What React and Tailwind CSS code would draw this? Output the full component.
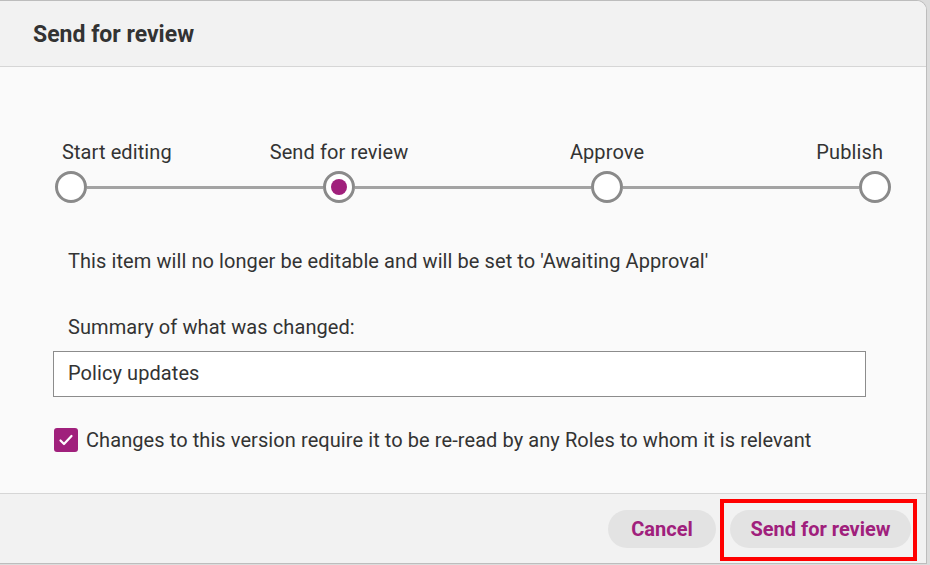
import React, { useState } from 'react';

const steps = ['Start editing', 'Send for review', 'Approve', 'Publish'];

function StepCircle({ active }) {
  return (
    <div className="flex h-[32px] w-[32px] shrink-0 items-center justify-center rounded-full border-[3px] border-[#8a8a8a] bg-white">
      {active && <div className="h-[16px] w-[16px] rounded-full bg-[#a0207c]" />}
    </div>
  );
}

function Stepper({ current }) {
  return (
    <div className="ml-[2px]">
      <div className="flex h-[24px] items-center px-[16px] text-[20px] leading-[24px] tracking-[0.1px] text-[#333]">
        <div className="flex w-0 justify-start">
          <span className="ml-[-9px] whitespace-nowrap">{steps[0]}</span>
        </div>
        <div className="flex-1" />
        <div className="flex w-0 justify-center">
          <span className="whitespace-nowrap">{steps[1]}</span>
        </div>
        <div className="flex-1" />
        <div className="flex w-0 justify-center">
          <span className="whitespace-nowrap">{steps[2]}</span>
        </div>
        <div className="flex-1" />
        <div className="flex w-0 justify-end">
          <span className="mr-[-8px] whitespace-nowrap">{steps[3]}</span>
        </div>
      </div>
      <div className="mt-[7px] flex items-center">
        {steps.map((step, index) => (
          <React.Fragment key={step}>
            {index > 0 && <div className="h-[3px] flex-1 bg-[#a3a3a3]" />}
            <StepCircle active={index === current} />
          </React.Fragment>
        ))}
      </div>
    </div>
  );
}

export default function App() {
  const [summary, setSummary] = useState('Policy updates');
  const [reread, setReread] = useState(true);

  return (
    <div
      className="flex h-[565px] w-[930px] bg-[#dcdcdc]"
      style={{ fontFamily: 'Roboto, "Noto Sans", Arial, sans-serif' }}
    >
      <div className="flex h-[564px] w-[927px] flex-col overflow-hidden rounded-tr-[10px] border-r border-b border-t border-[#bdbdbd] bg-[#fafafa]">
        <header className="flex h-[66px] shrink-0 items-center border-b border-[#d6d6d6] bg-[#f2f2f2] px-[33px] pt-[4px]">
          <h1 className="text-[23px] font-bold text-[#333]">Send for review</h1>
        </header>

        <div className="flex-1 pl-[53px] pr-[35px] pt-[73px]">
          <Stepper current={1} />

          <p className="mt-[46px] px-[15px] text-[20px] leading-[24px] tracking-[0.08px] text-[#333]">
            This item will no longer be editable and will be set to 'Awaiting Approval'
          </p>

          <label className="mt-[42px] block px-[15px] text-[20px] leading-[24px] tracking-[0.08px] text-[#333]">
            Summary of what was changed:
          </label>
          <input
            value={summary}
            onChange={(event) => setSummary(event.target.value)}
            className="mt-[12px] h-[46px] w-[813px] border border-[#8c8c8c] bg-white px-[14px] pb-[2px] text-[20px] tracking-[0.08px] text-[#333] outline-none"
          />

          <label className="mt-[31px] flex items-center gap-[8px] pl-[1px] text-[20px] leading-[24px] tracking-[0.08px] text-[#333]">
            <button
              type="button"
              onClick={() => setReread(!reread)}
              className={[
                'flex h-[24px] w-[24px] items-center justify-center rounded-[3px]',
                reread ? 'bg-[#a0207c]' : 'border-2 border-[#888] bg-white'
              ].join(' ')}
            >
              {reread && (
                <svg width="18" height="18" viewBox="0 0 18 18" fill="none">
                  <path d="M3.5 9.5l3.5 3.5 7.5-8" stroke="white" strokeWidth="2.2" strokeLinecap="round" strokeLinejoin="round" />
                </svg>
              )}
            </button>
            Changes to this version require it to be re-read by any Roles to whom it is relevant
          </label>
        </div>

        <footer className="flex h-[70px] shrink-0 items-center justify-end gap-[14px] border-t border-[#d6d6d6] bg-[#f2f2f2] pr-[15px]">
          <button className="h-[38px] w-[108px] rounded-full bg-[#e3e3e3] text-[20px] font-bold text-[#a0207c]">
            Cancel
          </button>
          <div className="relative">
            <button className="h-[38px] w-[181px] rounded-full bg-[#e3e3e3] text-[20px] font-bold text-[#a0207c]">
              Send for review
            </button>
            <div className="pointer-events-none absolute bottom-[-13px] left-[-10px] right-[-6px] top-[-11px] border-4 border-[#ff0000]" />
          </div>
        </footer>
      </div>
    </div>
  );
}
